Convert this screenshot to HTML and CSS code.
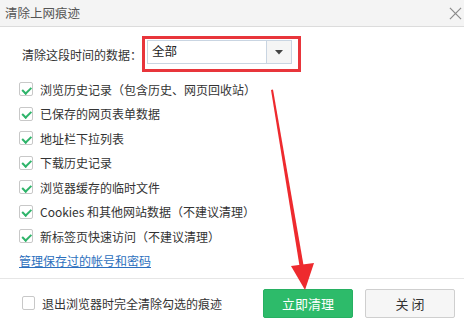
FILE: index.html
```html
<!DOCTYPE html>
<html lang="zh-CN">
<head>
<meta charset="utf-8">
<link rel="stylesheet" href="styles.css">
</head>
<body>
<div class="dialog">
  <div class="titlebar">
    <span class="title">清除上网痕迹</span>
    <svg class="close" width="14" height="14" viewBox="0 0 14 14"><path d="M1 1 L13 13 M13 1 L1 13" stroke="#8a8a8a" stroke-width="1.3" fill="none"/></svg>
  </div>
  <div class="content">
    <div class="time-row">
      <span class="label">清除这段时间的数据：</span>
      <div class="highlight">
        <div class="select">
          <span class="value">全部</span>
          <span class="drop"><svg width="8" height="5" viewBox="0 0 8 5"><path d="M0 0 H8 L4 4.5 Z" fill="#444"/></svg></span>
        </div>
      </div>
    </div>
    <ul class="options">
      <li><span class="cb on"></span>浏览历史记录（包含历史、网页回收站）</li>
      <li><span class="cb on"></span>已保存的网页表单数据</li>
      <li><span class="cb on"></span>地址栏下拉列表</li>
      <li><span class="cb on"></span>下载历史记录</li>
      <li><span class="cb on"></span>浏览器缓存的临时文件</li>
      <li><span class="cb on"></span>Cookies 和其他网站数据（不建议清理）</li>
      <li><span class="cb on"></span>新标签页快速访问（不建议清理）</li>
    </ul>
    <a class="manage" href="#">管理保存过的帐号和密码</a>
  </div>
  <div class="footer">
    <label class="exit"><span class="cb"></span>退出浏览器时完全清除勾选的痕迹</label>
    <button class="btn primary">立即清理</button>
    <button class="btn">关 闭</button>
  </div>
  <svg class="arrow" width="464" height="327" viewBox="0 0 464 327">
    <path d="M271 90 L273 89.5 L304 268 L300 269 Z" fill="#ee2a2e"/>
    <path d="M291 266 L314 263 L305 290 Z" fill="#ee2a2e"/>
  </svg>
</div>
</body>
</html>
```

FILE: styles.css
```css
* { box-sizing: border-box; }
html, body { margin: 0; padding: 0; }
body {
  width: 464px;
  height: 327px;
  background: #fff;
  font-family: "Microsoft YaHei", "Noto Sans CJK SC", "Noto Sans", sans-serif;
  font-size: 12px;
  color: #333;
  overflow: hidden;
}
.dialog {
  position: relative;
  width: 464px;
  height: 327px;
  display: flex;
  flex-direction: column;
}
.titlebar {
  height: 27px;
  background: #f4f4f4;
  border-bottom: 1px solid #dcdcdc;
  display: flex;
  align-items: center;
  justify-content: space-between;
  padding: 0 2px 2px 5px;
}
.title {
  font-size: 12.5px;
  color: #555;
}
.close { display: block; margin-top: 2px; width: 13px; height: 13px; }
.content {
  flex: 1;
  padding: 9px 0 0 19px;
}
.time-row {
  display: flex;
  align-items: center;
}
.label {
  margin-left: 3px;
  width: 120px;
  color: #333;
}
.highlight {
  border: 3px solid #e8353b;
  padding: 1px 6px 5px 2px;
}
.select {
  width: 145px;
  height: 24px;
  border: 1px solid #c9d5e2;
  display: flex;
  align-items: stretch;
  background: #fff;
}
.value {
  flex: 1;
  padding-left: 4px;
  line-height: 20px;
  font-size: 12.5px;
  color: #222;
}
.drop {
  width: 25px;
  background: #f5f5f5;
  border-left: 1px solid #c9d5e2;
  display: flex;
  align-items: center;
  justify-content: center;
}
.drop svg { display: block; }
.options {
  list-style: none;
  margin: 5px 0 0;
  padding: 0;
}
.options li {
  height: 24.5px;
  display: flex;
  align-items: center;
  color: #333;
}
.cb {
  width: 14px;
  height: 14px;
  border: 1px solid #c8c8c8;
  border-radius: 2px;
  margin-right: 7px;
  background: #fff;
  flex: none;
  position: relative;
}
.cb.on::after {
  content: "";
  position: absolute;
  left: 3.5px;
  top: 1.5px;
  width: 3.5px;
  height: 6.5px;
  border-right: 2px solid #2fb46a;
  border-bottom: 2px solid #2fb46a;
  transform: rotate(45deg);
}
.manage {
  display: block;
  margin-top: 0;
  height: 24px;
  line-height: 24px;
  color: #2c6fbd;
  text-decoration: underline;
}
.footer {
  height: 49px;
  border-top: 1px solid #e6e6e6;
  display: flex;
  align-items: center;
  padding: 0 9px 0 22px;
}
.exit {
  display: flex;
  align-items: center;
  flex: 1;
  color: #333;
}
.exit .cb { width: 13px; margin-right: 7px; }
.btn {
  width: 90px;
  height: 29px;
  font-family: inherit;
  font-size: 13px;
  border: 1px solid #cfcfcf;
  border-radius: 2px;
  background: #f6f6f6;
  color: #333;
  margin-left: 12px;
  padding: 0;
}
.btn.primary {
  background: #2dbb6a;
  border-color: #27b062;
  color: #fff;
  margin-left: 0;
}
.arrow {
  position: absolute;
  left: 0;
  top: 0;
  pointer-events: none;
}
```
